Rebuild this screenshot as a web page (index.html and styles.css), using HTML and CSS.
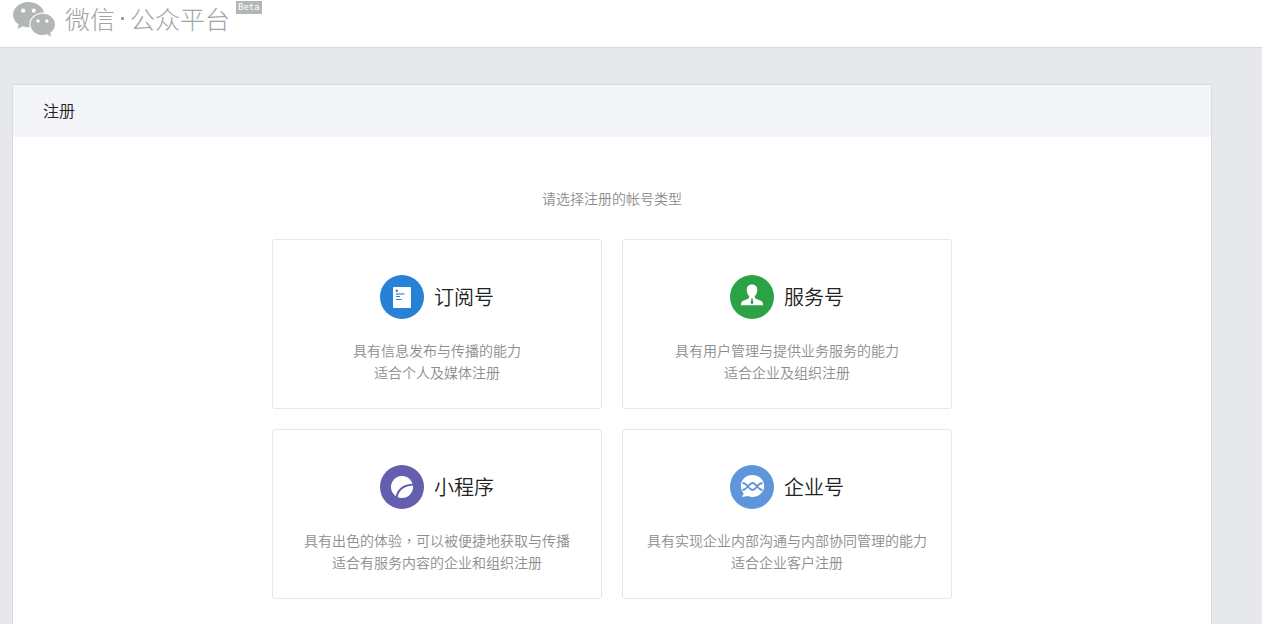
FILE: index.html
```html
<!DOCTYPE html>
<html lang="zh-CN">
<head>
<meta charset="utf-8">
<title>注册</title>
<link rel="stylesheet" href="styles.css">
</head>
<body>
<header class="header">
  <a class="brand" href="#">
    <svg class="brand-mark" viewBox="0 0 43 36" aria-hidden="true">
      <path fill="#b2b6b6" d="M15.500 1C7 1 0 6.800 0 13.700c0 3.900 2.200 7.300 5.700 9.700L4.500 28l5.200-2.700c1.800.6 4 1 6 1h1.200c-.4-1-.5-2-.5-3 0-6.500 6.200-11.700 13.700-11.700h.9C29.600 5.500 23.100 1 15.500 1z"/>
      <path fill="#b2b6b6" d="M42 23.400c0-5.800-5.500-10.600-12.200-10.600-6.900 0-12.300 4.800-12.300 10.600S22.900 34 29.800 34c1.500 0 3-.3 4.400-.7l4 2.400-1.100-3.900c2.900-2 4.900-5 4.900-8.400z"/>
      <g fill="#fff"><circle cx="10.200" cy="9.700" r="2.100"/><circle cx="20.800" cy="9.700" r="2.100"/><circle cx="25" cy="20" r="1.700"/><circle cx="33.800" cy="20" r="1.700"/></g>
    </svg>
    <span class="brand-name"><span>微信</span><span class="brand-dot"></span><span>公众平台</span></span>
    <span class="beta">Beta</span>
  </a>
</header>
<main class="panel">
  <h1 class="panel-title">注册</h1>
  <section class="panel-body">
    <p class="intro">请选择注册的帐号类型</p>
    <div class="types">
      <a class="card" href="#">
        <h2 class="card-title">
          <svg class="icon" viewBox="0 0 44 44" aria-hidden="true"><circle cx="22" cy="22" r="22" fill="#2782d7"/><rect x="13" y="12" width="18" height="21" rx="1" fill="#fff"/><circle cx="16.800" cy="15.800" r="1.200" fill="#2782d7"/><path d="M16 19h8.500" stroke="#78afe5" stroke-width="1.800"/><path d="M16 21.500h4M16 24.500h5.500" stroke="#2782d7" stroke-width="1"/></svg>
          订阅号
        </h2>
        <p class="desc">具有信息发布与传播的能力<br>适合个人及媒体注册</p>
      </a>
      <a class="card" href="#">
        <h2 class="card-title">
          <svg class="icon" viewBox="0 0 44 44" aria-hidden="true"><circle cx="22" cy="22" r="22" fill="#2ba245"/><path fill="#fff" d="M22 9.500c-3.200 0-5.300 2.200-5.300 5.500 0 2.500 1.100 4.700 2.500 6.100.2 1.500-.3 2.300-1.700 2.900l-4.300 1.700c-1.500.6-2.200 2-2.200 4.500h22c0-2.500-.7-3.900-2.200-4.500L26.500 24c-1.400-.6-1.900-1.400-1.700-2.900 1.400-1.400 2.500-3.600 2.500-6.100 0-3.300-2.100-5.500-5.300-5.500z"/><path fill="#2ba245" d="M20.900 23.500h2.200l-.5 1.300.9 3-1.500 1.700-1.500-1.700.9-3z"/></svg>
          服务号
        </h2>
        <p class="desc">具有用户管理与提供业务服务的能力<br>适合企业及组织注册</p>
      </a>
      <a class="card" href="#">
        <h2 class="card-title">
          <svg class="icon" viewBox="0 0 44 44" aria-hidden="true"><circle cx="22" cy="22" r="22" fill="#635eae"/><circle cx="22" cy="22" r="11" fill="#fff"/><path d="M16.500 33c1-7.500 6.500-13 17.500-13.500" fill="none" stroke="#635eae" stroke-width="2"/></svg>
          小程序
        </h2>
        <p class="desc">具有出色的体验<span class="comma" lang="zh-TW">，</span>可以被便捷地获取与传播<br>适合有服务内容的企业和组织注册</p>
      </a>
      <a class="card" href="#">
        <h2 class="card-title">
          <svg class="icon" viewBox="0 0 44 44" aria-hidden="true"><circle cx="22" cy="22" r="22" fill="#5f95db"/><path fill="#fff" d="M22.500 10C15.800 10 10.800 14.800 10.800 21c0 3 1.200 5.500 2.900 7.400L12 32l5.800-1.100c1.400.7 3 1.100 4.700 1.100C29.200 32 34.200 27.200 34.200 21s-5-11-11.700-11z"/><path d="M12.500 18c5 0 6 7 10 7s5-7 10-7M12.500 25c5 0 6-7 10-7s5 7 10 7" fill="none" stroke="#5f95db" stroke-width="1.800"/></svg>
          企业号
        </h2>
        <p class="desc">具有实现企业内部沟通与内部协同管理的能力<br>适合企业客户注册</p>
      </a>
    </div>
  </section>
</main>
</body>
</html>
```
FILE: styles.css
```css
* {
  box-sizing: border-box;
}

body {
  margin: 0;
  min-height: 100vh;
  display: flex;
  flex-direction: column;
  background: #e7e8eb;
  color: #222;
  font: 350 14px/22px "Noto Sans CJK SC", sans-serif;
}

a {
  color: inherit;
  text-decoration: none;
}

h1,
h2,
p {
  margin: 0;
  font-weight: inherit;
}

.header {
  display: flex;
  padding: 0 12px 10px;
  background: #fff;
  border-bottom: 1px solid #d9dadc;
}

.brand {
  display: flex;
  align-items: flex-start;
  color: #9fa4a5;
}

.brand-mark {
  width: 43px;
  height: 36px;
  margin: 1px 9px 0 1px;
}

.brand-name {
  display: flex;
  align-items: center;
  font-size: 25px;
  line-height: 36px;
  font-weight: 300;
}

.brand-dot {
  width: 3px;
  height: 3px;
  margin: 0 6px;
  background: currentColor;
}

.beta {
  margin: 1px 0 0 6px;
  padding: 0 2px;
  background: #b2b6b6;
  color: #fff;
  font: 9px/13px "DejaVu Sans Mono", monospace;
}

.panel {
  flex: 1;
  width: calc(100% - 24px);
  max-width: 1200px;
  margin: 36px 12px 0;
  background: #fff;
  border: 1px solid #d9dadc;
  border-bottom: 0;
}

.panel-title {
  padding: 0 30px 1px;
  background: #f4f5f9;
  font-size: 16px;
  line-height: 51px;
}

.panel-body {
  padding: 50px 20px 25px;
  text-align: center;
}

.intro {
  color: #8d8d8d;
}

.types {
  display: grid;
  grid-template-columns: repeat(2, minmax(0, 330px));
  justify-content: center;
  gap: 20px;
  margin-top: 30px;
}

.card {
  padding: 35px 10px 25px;
  border: 1px solid #e7e7eb;
  border-radius: 3px;
}

.card-title {
  display: flex;
  align-items: center;
  justify-content: center;
  gap: 10px;
  font-size: 20px;
  line-height: 44px;
}

.icon {
  width: 44px;
  height: 44px;
}

.desc {
  margin-top: 20px;
  color: #8d8d8d;
}

.comma {
  font-family: "Noto Sans CJK TC", sans-serif;
}
```
